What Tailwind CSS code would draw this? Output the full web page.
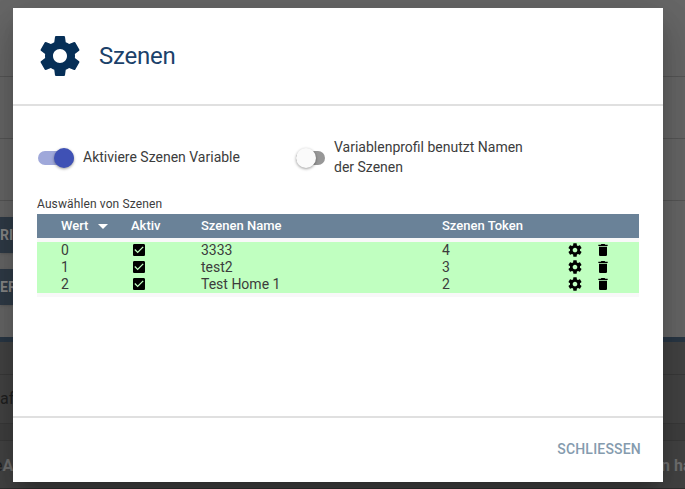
<!DOCTYPE html>
<html lang="de">
<head>
<meta charset="utf-8">
<title>Szenen</title>
<script src="https://cdn.jsdelivr.net/npm/@tailwindcss/browser@4"></script>
</head>
<body class="relative h-[489px] w-[685px] overflow-hidden bg-[#686868] font-[Roboto,sans-serif] text-[#3c3c3c]">
<svg class="hidden">
  <symbol id="gear" viewBox="0 0 24 24"><path d="M19.43 12.98c.04-.32.07-.64.07-.98s-.03-.66-.07-.98l2.11-1.65c.19-.15.24-.42.12-.64l-2-3.46c-.12-.22-.39-.3-.61-.22l-2.49 1c-.52-.4-1.08-.73-1.69-.98l-.38-2.65C14.46 2.18 14.25 2 14 2h-4c-.25 0-.46.18-.49.42l-.38 2.65c-.61.25-1.17.59-1.69.98l-2.49-1c-.23-.09-.49 0-.61.22l-2 3.46c-.13.22-.07.49.12.64l2.11 1.65c-.04.32-.07.65-.07.98s.03.66.07.98l-2.11 1.65c-.19.15-.24.42-.12.64l2 3.46c.12.22.39.3.61.22l2.49-1c.52.4 1.080.73 1.69.98l.38 2.65c.03.24.24.42.49.42h4c.25 0 .46-.18.49-.42l.38-2.65c.61-.25 1.17-.59 1.69-.98l2.49 1c.23.09.49 0 .61-.22l2-3.46c.12-.22.07-.49-.12-.64l-2.11-1.65zM12 15.5c-1.93 0-3.5-1.57-3.5-3.5s1.57-3.5 3.5-3.5 3.5 1.57 3.5 3.5-1.57 3.5-3.5 3.5z"/></symbol>
  <symbol id="check" viewBox="0 0 24 24"><path d="M19 3H5c-1.11 0-2 .9-2 2v14c0 1.1.89 2 2 2h14c1.11 0 2-.9 2-2V5c0-1.1-.89-2-2-2zm-9 14l-5-5 1.41-1.41L10 14.17l7.59-7.59L19 8l-9 9z"/></symbol>
  <symbol id="trash" viewBox="0 0 24 24"><path d="M6 19c0 1.100.9 2 2 2h8c1.100 0 2-.9 2-2V7H6v12zM19 4h-3.500l-1-1h-5l-1 1H5v2h14V4z"/></symbol>
</svg>

<!-- dimmed page -->
<div class="flex h-full flex-col">
  <div class="h-[77px] border-b border-[#575757]"></div>
  <div class="h-[62px] border-b border-[#575757]"></div>
  <div class="h-[62px] border-b border-[#575757]"></div>
  <div class="flex h-[136px] flex-col items-start gap-4 pt-4 text-sm font-bold text-[#8a8a8a]">
    <div class="flex h-9 w-10 items-center bg-[#303c48] shadow">RIE</div>
    <div class="flex h-9 w-10 items-center bg-[#303c48] shadow">ERN</div>
  </div>
  <div class="flex-1 border-t-[5px] border-[#2a3846] bg-[#444]">
    <div class="h-[33px] border-b border-[#3a3a3a]"></div>
    <div class="h-[49px] border-b border-[#3a3a3a] pt-3.5 text-base leading-[20px] text-[#202020]">aft</div>
    <div class="h-[17px] border-b border-[#3a3a3a] bg-[#404040]"></div>
    <div class="flex h-[48px] items-center justify-between border-b border-[#303030] pt-[3px] text-base leading-5 text-[#727272]">
      <div class="-ml-[6px]"><span class="text-[#202020]">e</span><span class="font-bold">A</span></div>
      <div class="w-[24px] whitespace-nowrap font-bold">n ha</div>
    </div>
  </div>
</div>

<!-- dialog -->
<div class="absolute top-2 left-[13px] flex h-[474px] w-[650px] flex-col bg-white shadow-[0_11px_15px_-7px_rgba(0,0,0,0.2),0_24px_38px_3px_rgba(0,0,0,0.14),0_9px_46px_8px_rgba(0,0,0,0.12)]">
  <header class="flex h-[98px] items-center gap-[15px] border-b-2 border-[#e0e0e0] pl-[23px] text-[#062f57]">
    <svg class="size-12 fill-current"><use href="#gear"/></svg>
    <h1 class="text-2xl leading-8 tracking-[-0.25px] text-[#1b416a]">Szenen</h1>
  </header>

  <main class="flex flex-1 flex-col px-6 pt-[31px]">
    <div class="flex h-10 items-center text-sm leading-5">
      <label class="flex w-[257px] items-center">
        <span class="mt-0.5 ml-px flex h-[14px] w-9 items-center justify-end rounded-full bg-[#9fa8da]"><span class="size-5 shrink-0 rounded-full bg-[#3f51b5] shadow-[0_1px_3px_rgba(0,0,0,0.4)]"></span></span>
        <span class="ml-[9px] whitespace-nowrap">Aktiviere Szenen Variable</span>
      </label>
      <label class="flex items-center">
        <span class="mt-0.5 ml-[2px] flex h-[14px] w-[29px] items-center rounded-full bg-[#979797]"><span class="size-5 shrink-0 rounded-full bg-[#fafafa] shadow-[0_1px_3px_rgba(0,0,0,0.4)]"></span></span>
        <span class="ml-[9px] w-[210px]">Variablenprofil benutzt Namen der Szenen</span>
      </label>
    </div>

    <p class="mt-[19px] h-[18px] text-xs leading-[16px] tracking-[0.12px]">Auswählen von Szenen</p>
    <div class="w-[602px] bg-[#f8f8f8] pb-1">
      <div class="mb-1 grid h-6 grid-cols-[70px_70px_241px_1fr] items-center bg-[#6a8298] pl-6 text-[13px] font-medium text-white">
        <span class="flex items-center gap-[10px]">Wert <svg viewBox="0 0 10 5" class="h-[5px] w-[10px] fill-white"><path d="M0 0h10L5 5z"/></svg></span>
        <span>Aktiv</span><span>Szenen Name</span><span>Szenen Token</span>
      </div>
      <div class="bg-[#c0ffc0] text-sm leading-[17px]">
        <div class="grid h-[17px] grid-cols-[70px_70px_241px_125px_28px_1fr] items-start pl-6"><span>0</span><svg class="size-4 fill-black"><use href="#check"/></svg><span>3333</span><span>4</span><svg class="size-4 fill-black"><use href="#gear"/></svg><svg class="size-4 fill-black"><use href="#trash"/></svg></div>
        <div class="grid h-[17px] grid-cols-[70px_70px_241px_125px_28px_1fr] items-start pl-6"><span>1</span><svg class="size-4 fill-black"><use href="#check"/></svg><span>test2</span><span>3</span><svg class="size-4 fill-black"><use href="#gear"/></svg><svg class="size-4 fill-black"><use href="#trash"/></svg></div>
        <div class="grid h-[17px] grid-cols-[70px_70px_241px_125px_28px_1fr] items-start pl-6"><span>2</span><svg class="size-4 fill-black"><use href="#check"/></svg><span>Test Home 1</span><span>2</span><svg class="size-4 fill-black"><use href="#gear"/></svg><svg class="size-4 fill-black"><use href="#trash"/></svg></div>
      </div>
    </div>
  </main>

  <footer class="flex h-[66px] items-center justify-end border-t-2 border-[#e0e0e0] pr-[22px] pb-0.5 text-sm font-medium tracking-[0.2px] text-[#859bae]"><button>SCHLIESSEN</button></footer>
</div>
</body>
</html>
